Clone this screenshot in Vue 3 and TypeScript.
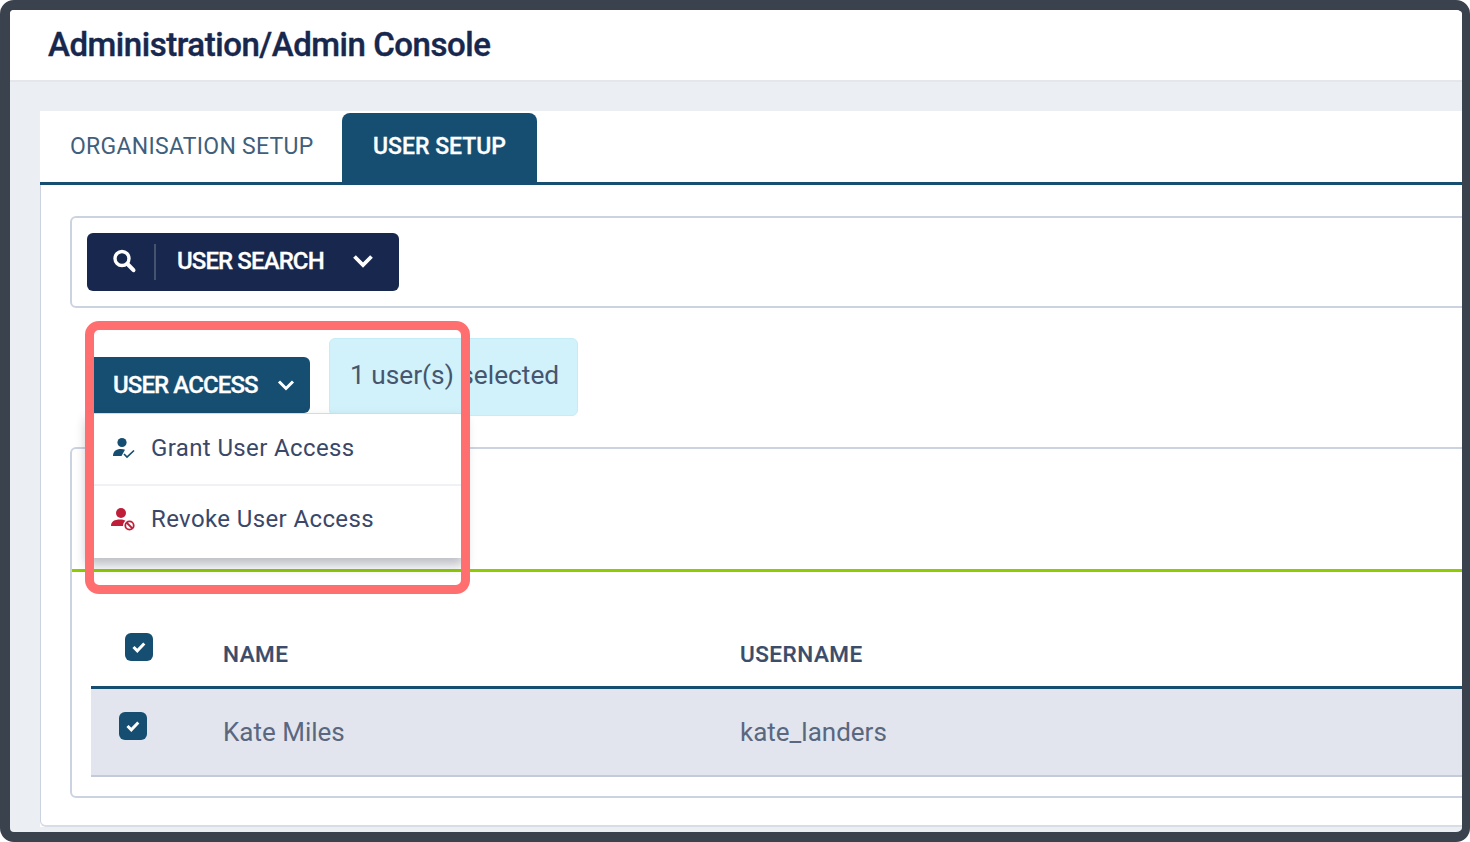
<script setup lang="ts">
const items = [
  { label: 'Grant User Access', kind: 'grant' },
  { label: 'Revoke User Access', kind: 'revoke' },
]
</script>

<template>
  <div class="frame">
    <header class="head"><h1>Administration/Admin Console</h1></header>
    <main class="main">
      <section class="card">
        <nav class="tabs">
          <span class="tab">ORGANISATION SETUP</span>
          <span class="tab active">USER SETUP</span>
        </nav>
        <div class="body">
          <div class="search-panel">
            <button class="search-btn">
              <svg class="search-ico" width="26" height="26" viewBox="0 0 26 26" fill="none" stroke="#fff">
                <circle cx="11" cy="9.500" r="7" stroke-width="3.4" />
                <path d="M16.500 15l6 6.200" stroke-width="4" stroke-linecap="round" />
              </svg>
              <i class="sep"></i>
              <span class="btn-text">USER SEARCH</span>
              <svg class="chev" width="22" height="16" viewBox="0 0 22 16" fill="none" stroke="#fff" stroke-width="3.800">
                <path d="M2.500 2.500l8.500 8.500 8.500-8.500" />
              </svg>
            </button>
          </div>

          <div class="toolbar">
            <div class="access">
              <button class="access-btn">
                <span>USER ACCESS</span>
                <svg width="18" height="12" viewBox="0 0 18 12" fill="none" stroke="#fff" stroke-width="3">
                  <path d="M2 2.500L9 9.500l7-7" />
                </svg>
              </button>
              <ul class="menu">
                <li v-for="it in items" :key="it.kind">
                  <svg v-if="it.kind === 'grant'" width="26" height="24" viewBox="0 0 26 24">
                    <circle cx="12" cy="6.500" r="4.600" fill="#164e72" />
                    <path d="M3 20c0-4.500 3-7 8-7 1.600 0 3 .3 4 .8L11.500 20z" fill="#164e72" />
                    <path d="M14 18l3 3 7-6.500" fill="none" stroke="#164e72" stroke-width="1.700" />
                  </svg>
                  <svg v-else width="26" height="24" viewBox="0 0 26 24">
                    <circle cx="11" cy="6" r="5" fill="#bf1e38" />
                    <path d="M1 19c0-4.500 3.500-6.500 9-6.500 2.500 0 4 .4 5.500 1.200-1.500 1.200-2.500 3-2.500 5.300z" fill="#bf1e38" />
                    <circle cx="19.500" cy="18.500" r="4.200" fill="none" stroke="#bf1e38" stroke-width="1.800" />
                    <path d="M16.500 15.500l6 6" stroke="#bf1e38" stroke-width="1.800" />
                  </svg>
                  <span>{{ it.label }}</span>
                </li>
              </ul>
            </div>
            <div class="alert">1 user(s) selected</div>
          </div>

          <div class="table-panel">
            <div class="table-top"></div>
            <div class="table">
              <div class="row th">
                <span class="check-cell"><span class="check">
                  <svg width="16" height="14" viewBox="0 0 16 14" fill="none" stroke="#fff" stroke-width="3"><path d="M2.500 7l3.800 3.800 7-7.300" /></svg>
                </span></span>
                <span>NAME</span>
                <span>USERNAME</span>
              </div>
              <div class="row td">
                <span class="check-cell"><span class="check">
                  <svg width="16" height="14" viewBox="0 0 16 14" fill="none" stroke="#fff" stroke-width="3"><path d="M2.500 7l3.800 3.800 7-7.300" /></svg>
                </span></span>
                <span>Kate Miles</span>
                <span>kate_landers</span>
              </div>
            </div>
          </div>
        </div>
      </section>
    </main>
    <div class="highlight"></div>
  </div>
</template>

<style>
html, body { margin: 0; background: #fff; }
</style>

<style scoped>
* { box-sizing: border-box; }
.frame {
  position: relative;
  width: 1470px;
  height: 842px;
  border-style: solid;
  border-color: #3a424e;
  border-width: 10px 8px 10px 10px;
  border-radius: 14px;
  overflow: hidden;
  background: #ebeef3;
  font-family: Roboto, "Liberation Sans", sans-serif;
  display: flex;
  flex-direction: column;
}
.head {
  height: 72px;
  flex: none;
  background: #fff;
  border-bottom: 2px solid #e4e6eb;
  padding-left: 38px;
  display: flex;
  align-items: center;
}
h1 {
  margin: -2px 0 0;
  font-size: 33px;
  font-weight: 500;
  letter-spacing: -0.46px;
  color: #17274d;
  white-space: nowrap;
  -webkit-text-stroke: 0.4px #17274d;
}
.main { flex: 1; padding: 29px 0 0 30px; min-height: 0; }
.card {
  width: 1460px;
  background: #fff;
  display: flex;
  flex-direction: column;
  height: 716px;
}
.tabs {
  display: flex;
  height: 74px;
  flex: none;
  border-bottom: 3px solid #164e72;
}
.tab {
  width: 302px;
  padding: 22px 0 0 30px;
  font-size: 23px;
  color: #3f5f7c;
  letter-spacing: 0.280px;
  white-space: nowrap;
}
.tab.active {
  width: 195px;
  height: 71px;
  margin-top: 2px;
  padding: 20px 0 0 31px;
  background: #164e72;
  color: #fff;
  font-weight: 500;
  letter-spacing: 0;
  border-radius: 8px 8px 0 0;
  -webkit-text-stroke: 0.3px #fff;
}
.body {
  flex: none;
  height: 642px;
  padding: 31px 0 0 29px;
  border-left: 1px solid #ccd3e0;
  border-bottom: 2px solid #d8dce6;
  border-bottom-left-radius: 6px;
}
.search-panel {
  height: 92px;
  border: 2px solid #ccd3e0;
  border-radius: 6px;
  padding: 15px 0 0 15px;
}
.search-btn {
  display: flex;
  align-items: center;
  width: 312px;
  height: 58px;
  background: #17274d;
  border: 0;
  border-radius: 6px;
  padding: 0;
  color: #fff;
  font: 500 24px Roboto, sans-serif;
  letter-spacing: -0.900px;
  -webkit-text-stroke: 0.3px #fff;
}
.btn-text { padding-bottom: 2px; }
.search-ico { margin-left: 24px; }
.sep { width: 2px; height: 36px; background: #46536f; margin: 0 21px 0 17px; }
.chev { margin-left: 28px; }
.toolbar {
  display: flex;
  align-items: flex-start;
  margin-top: 30px;
}
.access { position: relative; width: 242px; padding-top: 19px; margin-left: 17px; }
.access-btn {
  display: flex;
  align-items: center;
  gap: 19px;
  width: 223px;
  height: 56px;
  padding: 0 0 0 26px;
  border: 0;
  border-radius: 6px;
  background: #164e72;
  color: #fff;
  font: 500 24px Roboto, sans-serif;
  letter-spacing: -0.900px;
  white-space: nowrap;
  -webkit-text-stroke: 0.3px #fff;
}
.menu {
  position: absolute;
  z-index: 3;
  left: 0;
  top: 75px;
  width: 377px;
  margin: 0;
  padding: 0;
  list-style: none;
  background: #fff;
  border-top: 1px solid #d5d9e5;
  box-shadow: 0 7px 11px rgba(30, 35, 60, 0.3);
}
.menu li {
  display: flex;
  align-items: center;
  height: 72px;
  padding: 0 0 2px 23px;
  gap: 15px;
  font-size: 24px;
  letter-spacing: 0.380px;
  color: #3b4768;
  border-bottom: 2px solid #f0f1f4;
  white-space: nowrap;
}
.menu li:last-child { border-bottom: 0; padding-bottom: 6px; }
.alert {
  width: 249px;
  height: 78px;
  padding: 21px 0 0 20px;
  background: #d1f2fb;
  border: 1px solid #c4edf8;
  border-radius: 6px;
  color: #46566f;
  font-size: 26.250px;
  white-space: nowrap;
}
.table-panel {
  position: relative;
  height: 351px;
  margin-top: 31px;
  border: 2px solid #ccd3e0;
  border-radius: 6px;
  padding: 0 0 0 19px;
}
.table-top {
  height: 123px;
  margin: 0 0 0 -19px;
  border-bottom: 3px solid #8fcb00;
}
.row {
  display: grid;
  grid-template-columns: 132px 517px 1fr;
  align-items: center;
}
.th {
  height: 117px;
  padding-top: 50px;
  border-bottom: 3px solid #164e72;
  font-size: 22.500px;
  font-weight: 500;
  letter-spacing: 0.500px;
  color: #3c4c6b;
  -webkit-text-stroke: 0.2px #3c4c6b;
}
.td {
  height: 88px;
  background: #e2e5ed;
  border-bottom: 2px solid #c5cada;
  font-size: 26px;
  color: #5a6780;
}
.check-cell { display: flex; }
.check {
  display: flex;
  align-items: center;
  justify-content: center;
  width: 28px;
  height: 28px;
  border-radius: 6px;
  background: #164e72;
}
.th .check { margin: -14px 0 0 34px; }
.td .check { margin: -13px 0 0 28px; }
.highlight {
  position: absolute;
  z-index: 5;
  left: 75px;
  top: 311px;
  width: 385px;
  height: 273px;
  border: 9px solid #ff6f6f;
  border-radius: 14px;
  pointer-events: none;
}
</style>
